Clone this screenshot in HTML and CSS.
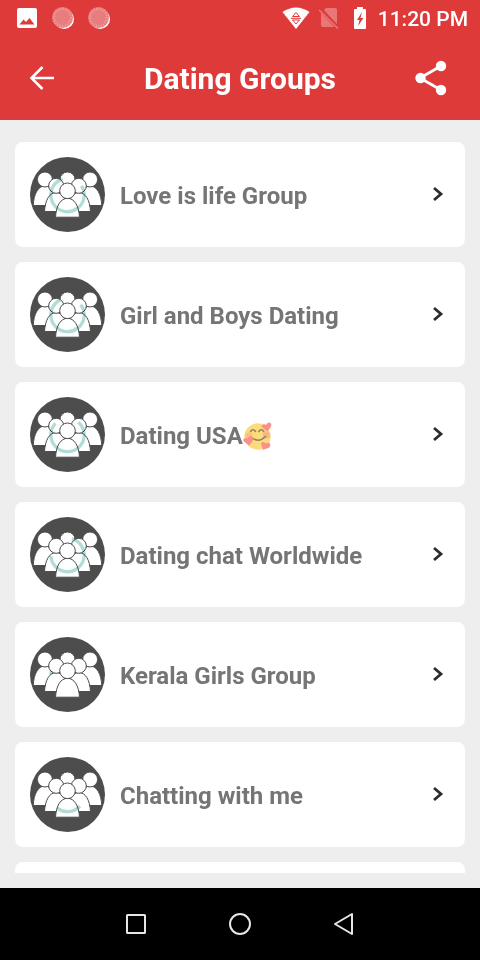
FILE: index.html
```html
<!DOCTYPE html>
<html lang="en">
<head>
<meta charset="utf-8">
<meta name="viewport" content="width=device-width, initial-scale=1">
<title>Dating Groups</title>
<link rel="stylesheet" href="styles.css">
</head>
<body>
<svg class="sprite" aria-hidden="true">
  <symbol id="people" viewBox="0 0 75 75">
    <circle cx="37.5" cy="37.5" r="37.5" fill="#4d4d4d"/>
    <g fill="#fff" stroke="#4d4d4d" stroke-width="1">
      <circle cx="37.5" cy="22.5" r="7.5"/>
      <path d="M3.2 48.5C3.8 37 8 29 14.8 29S26.400 37 26.500 48.500Z"/>
      <path d="M48.500 48.500C49 37 53.400 29 60.200 29S71.200 37 71.800 48.500Z"/>
      <circle cx="14.900" cy="22.500" r="7.500"/>
      <circle cx="60.100" cy="22.500" r="7.500"/>
      <path d="M14.500 54.500C15.200 43 19.500 35.500 26.200 35.500S37 43 37.800 54.500Z"/>
      <path d="M37.200 54.500C38 43 42 35.500 48.800 35.500S59.800 43 60.500 54.500Z"/>
      <circle cx="26.200" cy="28.800" r="7.500"/>
      <circle cx="48.800" cy="28.800" r="7.500"/>
      <path d="M25.500 60.200C26.200 48.500 30.700 41.300 37.500 41.300S48.800 48.500 49.500 60.200Z"/>
      <circle cx="37.500" cy="33.800" r="7.800"/>
    </g>
  </symbol>
  <symbol id="chat-coin" viewBox="0 0 24 24">
    <circle cx="13" cy="13" r="10" fill="#fff"/>
    <circle cx="11.500" cy="11.500" r="10.500" fill="#e97c7c"/>
    <circle cx="11.500" cy="11.500" r="8.500" fill="none" stroke="#efa0a0" stroke-width="2.500" stroke-dasharray="1 1.500"/>
  </symbol>
  <symbol id="chevron" viewBox="0 0 12 18">
    <path d="M2 2L9 8L2 14" fill="none" stroke="#2c2c2c" stroke-width="2.800"/>
  </symbol>
</svg>

<header class="top">
  <div class="status">
    <div class="status-side notices">
      <svg width="20" height="20" viewBox="0 0 20 20"><rect width="20" height="20" rx="2" fill="#fff"/><path d="M2.500 16.500L6.500 11.500L9 14L12.500 10L17.500 16.500Z" fill="#df3a3a"/></svg>
      <svg width="24" height="24"><use href="#chat-coin"/></svg>
      <svg width="24" height="24"><use href="#chat-coin"/></svg>
    </div>
    <div class="status-side signals">
      <svg class="wifi" width="28" height="22" viewBox="0 0 28 22"><path d="M.5 5Q14-4 27.500 5L14 22Z" fill="#fff"/><path d="M10.500 9.500L14 5.500L17.500 9.500ZM10.500 13L14 17L17.500 13ZM9 11.300H19" fill="none" stroke="#df3a3a" stroke-width="1"/></svg>
      <svg class="sim" width="20" height="22" viewBox="0 0 20 22"><path d="M3 5L7 1H16Q18 1 18 3V20H4Q2 20 2 18V6Z" fill="#e97777"/><path d="M1 2L19 21" stroke="#df3a3a" stroke-width="4"/><path d="M0 3L19 21.500" stroke="#e97777" stroke-width="1.600"/></svg>
      <svg class="battery" width="12" height="22" viewBox="0 0 12 22"><path d="M3 0H9V2H11Q12 2 12 3V21Q12 22 11 22H1Q0 22 0 21V3Q0 2 1 2H3Z" fill="#fff"/><path d="M8 5L3 13H5.500L4 19L9.500 11H6.500Z" fill="#df3a3a"/></svg>
      <span class="time">11:20 PM</span>
    </div>
  </div>
  <div class="appbar">
    <button class="icon-button back" type="button" aria-label="Back"><svg width="26" height="26" viewBox="0 0 26 26"><path d="M13.500 2L2.500 13L13.500 24M2.500 13H25" fill="none" stroke="#fff" stroke-width="2.600"/></svg></button>
    <h1>Dating Groups</h1>
    <button class="icon-button" type="button" aria-label="Share"><svg width="32" height="36" viewBox="0 0 32 36"><path d="M26 6L5 18L26 30" fill="none" stroke="#fff" stroke-width="2.800"/><g fill="#fff"><circle cx="26" cy="6" r="5.200"/><circle cx="5.500" cy="18" r="5.200"/><circle cx="26" cy="30" r="5.200"/></g></svg></button>
  </div>
</header>

<main>
  <ul class="groups">
    <li><a class="card" href="#">
      <svg class="avatar" viewBox="0 0 75 75"><use href="#people"/><circle class="ring" cx="37.500" cy="38" r="16.700" pathLength="360" stroke-dasharray="287 73" transform="rotate(-33 37.500 38)"/></svg>
      <span class="name">Love is life Group</span><svg class="chevron"><use href="#chevron"/></svg></a></li>
    <li><a class="card" href="#">
      <svg class="avatar" viewBox="0 0 75 75"><use href="#people"/><circle class="ring" cx="37.500" cy="38" r="16.700" pathLength="360" stroke-dasharray="283 77" transform="rotate(-38 37.500 38)"/></svg>
      <span class="name">Girl and Boys Dating</span><svg class="chevron"><use href="#chevron"/></svg></a></li>
    <li><a class="card" href="#">
      <svg class="avatar" viewBox="0 0 75 75"><use href="#people"/><circle class="ring" cx="37.500" cy="38" r="16.700" pathLength="360" stroke-dasharray="274 86" transform="rotate(-50 37.500 38)"/></svg>
      <span class="name">Dating USA<svg class="emoji" role="img" aria-label="🥰" viewBox="0 0 29 28">
        <circle cx="14.500" cy="14.500" r="13.200" fill="#fbdc78"/>
        <circle cx="6" cy="14" r="3.500" fill="#f9c080"/><circle cx="23.500" cy="13" r="3.500" fill="#f9b58a"/>
        <path d="M7.500 9.500Q10 6 12.500 9.500M15.800 9.500Q18.300 6 20.800 9.500M9 16Q16 21 22.500 14.500" fill="none" stroke="#8d806a" stroke-width="1.500" stroke-linecap="round"/>
        <g fill="#fa8f8c"><path d="M24.500 9.500L19.300 5.600C17.600 3.500 20.500 .8 23.200 3C24 -.5 28.500 -.3 28.300 3C28.200 5.500 26 7 24.500 9.500Z"/><path d="M6.500 23.500L.8 19.500C-.9 17.500 1.800 14.600 4.800 16.800C5.500 13 10.200 13.300 10 17C9.900 19.300 8 21 6.500 23.500Z"/><path d="M20 28L18.200 22.300C18.100 19.500 21.500 19 22.800 21.700C25.500 19.500 28.500 22 27 24.500C26 26.500 22.500 26.500 20 28Z"/></g>
      </svg></span><svg class="chevron"><use href="#chevron"/></svg></a></li>
    <li><a class="card" href="#">
      <svg class="avatar" viewBox="0 0 75 75"><use href="#people"/><circle class="ring" cx="37.500" cy="38" r="16.700" pathLength="360" stroke-dasharray="251 109" transform="rotate(-75 37.500 38)"/></svg>
      <span class="name">Dating chat Worldwide</span><svg class="chevron"><use href="#chevron"/></svg></a></li>
    <li><a class="card" href="#">
      <svg class="avatar" viewBox="0 0 75 75"><use href="#people"/><circle class="ring" cx="37.500" cy="38" r="16.700" pathLength="360" stroke-dasharray="14 346" transform="rotate(181 37.500 38)"/></svg>
      <span class="name">Kerala Girls Group</span><svg class="chevron"><use href="#chevron"/></svg></a></li>
    <li><a class="card" href="#">
      <svg class="avatar" viewBox="0 0 75 75"><use href="#people"/><circle class="ring" cx="37.500" cy="38" r="16.700" pathLength="360" stroke-dasharray="86 274" transform="rotate(42 37.500 38)"/></svg>
      <span class="name">Chatting with me</span><svg class="chevron"><use href="#chevron"/></svg></a></li>
    <li class="card"></li>
  </ul>
</main>

<nav class="system">
  <button type="button" aria-label="Recent apps"><svg width="24" height="24" viewBox="0 0 24 24"><rect x="3" y="3" width="18" height="18" rx=".5"/></svg></button>
  <button type="button" aria-label="Home"><svg width="24" height="24" viewBox="0 0 24 24"><circle cx="12" cy="12" r="10"/></svg></button>
  <button type="button" aria-label="Go back"><svg width="24" height="24" viewBox="0 0 24 24"><path d="M20 2V22L3 12Z" stroke-linejoin="round"/></svg></button>
</nav>
</body>
</html>
```
FILE: styles.css
```css
* {
  box-sizing: border-box;
}

body {
  margin: 0;
  height: 100vh;
  display: flex;
  flex-direction: column;
  background: #eee;
  font-family: Roboto, "Liberation Sans", sans-serif;
}

svg {
  display: block;
  flex: none;
}

button {
  border: 0;
  padding: 0;
  background: none;
  display: flex;
  align-items: center;
  justify-content: center;
}

.sprite {
  position: absolute;
  width: 0;
  height: 0;
}

.top {
  flex: none;
  background: #df3a3a;
  color: #fff;
}

.status {
  height: 36px;
  padding: 0 12px 0 17px;
  display: flex;
  align-items: center;
  justify-content: space-between;
}

.status-side {
  display: flex;
  align-items: center;
}

.notices {
  gap: 12px;
}

.notices svg:first-child {
  margin-right: 2px;
}

.signals {
  gap: 12px;
}

.sim {
  margin: 0 3px 0 -4px;
}

.wifi {
  margin-right: 1px;
}

.time {
  padding-top: 2px;
  font-size: 21px;
  font-weight: 500;
  line-height: 34px;
}

.appbar {
  height: 84px;
  padding: 0 17px;
  display: flex;
  align-items: center;
  justify-content: space-between;
}

.icon-button {
  width: 64px;
  height: 44px;
}

.back {
  justify-content: flex-start;
  padding-left: 12px;
}

h1 {
  margin: 0;
  padding-top: 2px;
  font-size: 30px;
  font-weight: 700;
  line-height: 36px;
}

main {
  flex: 1;
  min-height: 0;
  display: flex;
  padding: 22px 15px 15px;
}

.groups {
  flex: 1;
  margin: 0;
  padding: 0;
  list-style: none;
  overflow: hidden;
  display: flex;
  flex-direction: column;
  gap: 15px;
}

.groups li {
  flex: none;
}

.card {
  min-height: 105px;
  padding: 15px 21px 15px 15px;
  display: flex;
  align-items: center;
  gap: 15px;
  border-radius: 8px;
  background: #fff;
  color: #757575;
  text-decoration: none;
}

.avatar {
  width: 75px;
  height: 75px;
}

.ring {
  fill: none;
  stroke: #b2dcd8;
  stroke-width: 3.3px;
  mix-blend-mode: multiply;
}

.name {
  flex: 1;
  display: flex;
  align-items: center;
  padding-top: 2px;
  font-size: 24px;
  font-weight: 700;
  line-height: 28px;
}

.emoji {
  width: 29px;
  height: 28px;
}

.chevron {
  width: 12px;
  height: 18px;
}

.system {
  flex: none;
  height: 72px;
  display: flex;
  align-items: center;
  justify-content: center;
  gap: 80px;
  background: #000;
}

.system svg {
  fill: none;
  stroke: #e6e6e6;
  stroke-width: 2px;
}
```
